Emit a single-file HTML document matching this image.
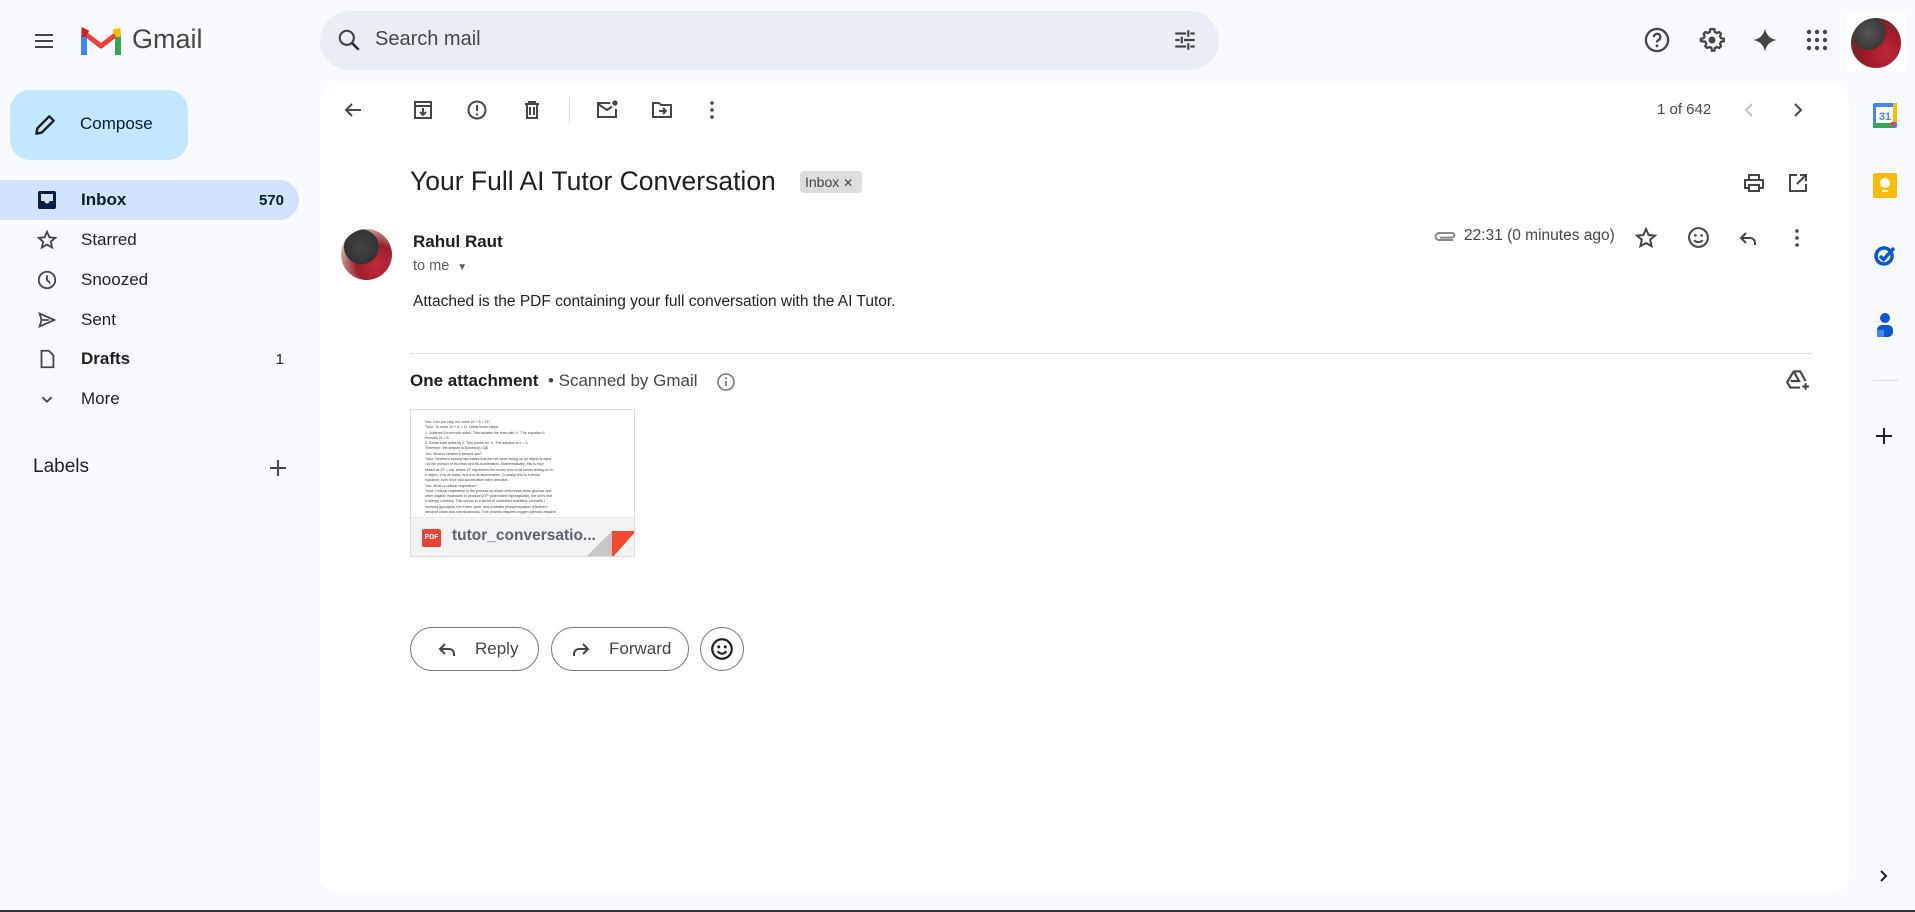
<!DOCTYPE html>
<html><head><meta charset="utf-8"><style>
*{box-sizing:border-box;margin:0;padding:0}
body{width:1915px;height:912px;background:#f8fafd;font-family:"Liberation Sans",Arial,sans-serif;color:#1f1f1f;position:relative;overflow:hidden}
.a{position:absolute}
svg{display:block}
.ic{fill:none;stroke:#444746;stroke-width:2}
.nav{position:absolute;left:0;width:299px;height:40px;display:flex;align-items:center;font-size:17px;color:#1f1f1f}
.nav .t{position:absolute;left:81px}
.nav .c{position:absolute;right:15px;font-size:15px}
.nav svg{position:absolute;left:36px}
.btn{position:absolute;height:44px;border:1px solid #747775;border-radius:22px;display:flex;align-items:center;font-size:17px;color:#444746}
</style></head><body>
<!-- top bar -->
<svg class="a" style="left:32px;top:29px" width="24" height="24" viewBox="0 0 24 24"><path d="M3 6h18M3 12h18M3 18h18" stroke="#444746" stroke-width="2"/></svg>
<svg class="a" style="left:81px;top:27px" width="40" height="30" viewBox="0 0 40 30"><path d="M3 28V6l17 13L37 6v22" fill="none" stroke="#ea4335" stroke-width="5" stroke-linejoin="round"/><path d="M3 28V8" stroke="#4285f4" stroke-width="6"/><path d="M37 28V8" stroke="#34a853" stroke-width="6"/><path d="M32 5l5-1v6" stroke="#fbbc04" stroke-width="5" fill="none"/><path d="M3 10V4l4 2" stroke="#c5221f" stroke-width="5" fill="none"/></svg>
<div class="a" style="left:132px;top:24px;font-size:27px;color:#444746">Gmail</div>
<div class="a" style="left:320px;top:11px;width:899px;height:59px;border-radius:30px;background:#e9eef6"></div>
<svg class="a" style="left:336px;top:27px" width="26" height="26" viewBox="0 0 24 24"><circle cx="10" cy="10" r="6.5" class="ic" stroke="#1f1f1f"/><path d="M15 15l6 6" stroke="#1f1f1f" stroke-width="2.2"/></svg>
<div class="a" style="left:375px;top:28px;font-size:20px;color:#444746">Search mail</div>
<svg class="a" style="left:1172px;top:27px" width="26" height="26" viewBox="0 0 24 24"><path d="M3 6h10M17 6h4M15 3v6M3 12h4M11 12h10M9 9v6M3 18h10M17 18h4M15 15v6" stroke="#444746" stroke-width="2"/></svg>
<svg class="a" style="left:1643px;top:26px" width="28" height="28" viewBox="0 0 24 24"><circle cx="12" cy="12" r="9.5" class="ic"/><path d="M9.3 9.5a2.8 2.8 0 1 1 3.8 2.6c-.8.4-1.1.9-1.1 1.9" class="ic"/><circle cx="12" cy="17" r="1.2" fill="#444746"/></svg>
<svg class="a" style="left:1698px;top:26px" width="28" height="28" viewBox="0 0 24 24"><path d="M12 2.5l2 .3.5 2.3 1.6.9 2.2-.8 1.4 1.5-.8 2.2.9 1.6 2.3.5v2l-2.3.5-.9 1.6.8 2.2-1.4 1.5-2.2-.8-1.6.9-.5 2.3h-2l-.5-2.3-1.6-.9-2.2.8-1.4-1.5.8-2.2-.9-1.6L2.5 13v-2l2.3-.5.9-1.6-.8-2.2 1.4-1.5 2.2.8 1.6-.9.5-2.3z" class="ic"/><circle cx="12" cy="12" r="3" fill="#444746"/></svg>
<svg class="a" style="left:1752px;top:27px" width="26" height="26" viewBox="0 0 24 24"><path d="M12 1C12.8 7 17 11.2 23 12 17 12.8 12.8 17 12 23 11.2 17 7 12.8 1 12 7 11.2 11.2 7 12 1z" fill="#444746"/></svg>
<svg class="a" style="left:1806px;top:29px" width="22" height="22" viewBox="0 0 22 22" fill="#444746"><circle cx="3" cy="3" r="2.2"/><circle cx="11" cy="3" r="2.2"/><circle cx="19" cy="3" r="2.2"/><circle cx="3" cy="11" r="2.2"/><circle cx="11" cy="11" r="2.2"/><circle cx="19" cy="11" r="2.2"/><circle cx="3" cy="19" r="2.2"/><circle cx="11" cy="19" r="2.2"/><circle cx="19" cy="19" r="2.2"/></svg>
<div class="a" style="left:1847px;top:13px;width:59px;height:59px;background:#fff"></div>
<div class="a" style="left:1851px;top:18px;width:50px;height:50px;border-radius:50%;background:radial-gradient(circle at 35% 30%,#555 0,#3a3a3a 35%,transparent 36%),radial-gradient(circle at 70% 70%,#c0283a 0,#a01c2c 40%,#6a2a2a 70%);"></div>
<!-- sidebar -->
<div class="a" style="left:10px;top:90px;width:178px;height:70px;border-radius:20px;background:#c2e7ff"></div>
<svg class="a" style="left:32px;top:112px" width="26" height="26" viewBox="0 0 24 24"><path d="M4 20l1-5L16 4l4 4L9 19z" fill="none" stroke="#1f1f1f" stroke-width="2.2" stroke-linejoin="round"/></svg>
<div class="a" style="left:80px;top:114px;font-size:17px;color:#001d35">Compose</div>
<div class="a" style="left:0;top:180px;width:299px;height:40px;border-radius:0 20px 20px 0;background:#d3e3fd"></div>
<div class="nav" style="top:180px;font-weight:bold;color:#001d35"><svg width="22" height="22" viewBox="0 0 22 22"><rect x="2" y="2" width="18" height="18" rx="2" fill="#041e49"/><path d="M5 5h12v7h-3.5a2.5 2.5 0 0 1-5 0H5z" fill="#d3e3fd"/></svg><span class="t">Inbox</span><span class="c">570</span></div>
<div class="nav" style="top:220px"><svg width="22" height="22" viewBox="0 0 24 24"><path d="M12 3l2.7 6 6.3.6-4.8 4.2 1.4 6.4L12 17l-5.6 3.2 1.4-6.4L3 9.6 9.3 9z" class="ic"/></svg><span class="t">Starred</span></div>
<div class="nav" style="top:260px"><svg width="22" height="22" viewBox="0 0 24 24"><circle cx="12" cy="12" r="9" class="ic"/><path d="M12 7v5l3.5 3.5" class="ic"/></svg><span class="t">Snoozed</span></div>
<div class="nav" style="top:300px"><svg width="22" height="22" viewBox="0 0 24 24"><path d="M4 5l16 7-16 7 2-7z M6 12h8" class="ic"/></svg><span class="t">Sent</span></div>
<div class="nav" style="top:339px;font-weight:bold"><svg width="22" height="22" viewBox="0 0 24 24"><path d="M6 3h8l5 5v13H6z" class="ic"/></svg><span class="t">Drafts</span><span class="c" style="font-weight:normal">1</span></div>
<div class="nav" style="top:379px"><svg width="22" height="22" viewBox="0 0 24 24"><path d="M7 10l5 5 5-5" class="ic"/></svg><span class="t">More</span></div>
<div class="a" style="left:33px;top:456px;font-size:19px">Labels</div>
<svg class="a" style="left:268px;top:458px" width="20" height="20" viewBox="0 0 20 20"><path d="M10 2v16M2 10h16" stroke="#444746" stroke-width="2"/></svg>
<!-- main card -->
<div class="a" style="left:320px;top:81px;width:1529px;height:812px;border-radius:20px;background:#fff"></div>
<svg class="a" style="left:341px;top:98px" width="24" height="24" viewBox="0 0 24 24"><path d="M20 12H5M11 6l-6 6 6 6" class="ic"/></svg>
<svg class="a" style="left:411px;top:98px" width="24" height="24" viewBox="0 0 24 24"><path d="M4 4h16v16H4zM4 8h16M12 10v7M9 14l3 3 3-3" class="ic"/></svg>
<svg class="a" style="left:465px;top:98px" width="24" height="24" viewBox="0 0 24 24"><circle cx="12" cy="12" r="8.5" class="ic"/><path d="M12 7v6" class="ic"/><circle cx="12" cy="16.5" r="1.2" fill="#444746"/></svg>
<svg class="a" style="left:520px;top:98px" width="24" height="24" viewBox="0 0 24 24"><path d="M5 6h14M9 6V4h6v2M7 6v14h10V6M10 9v8M14 9v8" class="ic"/></svg>
<div class="a" style="left:569px;top:97px;width:1px;height:26px;background:#dadce0"></div>
<svg class="a" style="left:595px;top:98px" width="24" height="24" viewBox="0 0 24 24"><path d="M15 5H3v14h18v-8M3 6l9 6 5-3.5" class="ic"/><circle cx="20" cy="5" r="2.6" fill="#444746"/></svg>
<svg class="a" style="left:650px;top:98px" width="24" height="24" viewBox="0 0 24 24"><path d="M3 5h6l2 2h10v12H3zM9 13h7M13 10l3 3-3 3" class="ic"/></svg>
<svg class="a" style="left:700px;top:98px" width="24" height="24" viewBox="0 0 24 24" fill="#444746"><circle cx="12" cy="5" r="1.8"/><circle cx="12" cy="12" r="1.8"/><circle cx="12" cy="19" r="1.8"/></svg>
<div class="a" style="left:1657px;top:101px;font-size:15px;color:#444746">1 of 642</div>
<svg class="a" style="left:1740px;top:100px" width="18" height="20" viewBox="0 0 18 20"><path d="M12 4l-6 6 6 6" fill="none" stroke="#c4c7c5" stroke-width="2"/></svg>
<svg class="a" style="left:1789px;top:100px" width="18" height="20" viewBox="0 0 18 20"><path d="M6 4l6 6-6 6" fill="none" stroke="#444746" stroke-width="2"/></svg>
<div class="a" style="left:410px;top:166px;font-size:26.5px;color:#1f1f1f">Your Full AI Tutor Conversation</div>
<div class="a" style="left:800px;top:171px;width:62px;height:22px;border-radius:4px;background:#dddddd;font-size:14px;color:#444;padding:3px 0 0 5px">Inbox <span style="font-size:12px">✕</span></div>
<svg class="a" style="left:1742px;top:171px" width="24" height="24" viewBox="0 0 24 24"><path d="M7 8V4h10v4M6 17H3V9h18v8h-3M7 14h10v6H7z" class="ic"/></svg>
<svg class="a" style="left:1786px;top:171px" width="24" height="24" viewBox="0 0 24 24"><path d="M11 4H4v16h16v-7M14 4h6v6M20 4l-9 9" class="ic"/></svg>
<div class="a" style="left:341px;top:229px;width:51px;height:51px;border-radius:50%;background:radial-gradient(circle at 40% 35%,#444 0,#333 38%,transparent 39%),radial-gradient(circle at 70% 70%,#c4283c 0,#9a2030 40%,#c9b0a0 75%)"></div>
<div class="a" style="left:413px;top:232px;font-size:17px;font-weight:bold">Rahul Raut</div>
<div class="a" style="left:413px;top:258px;font-size:14.5px;color:#5e5e5e">to me <span style="font-size:10px;margin-left:4px">▼</span></div>
<div class="a" style="left:413px;top:293px;font-size:15.5px;color:#222">Attached is the PDF containing your full conversation with the AI Tutor.</div>
<svg class="a" style="left:1433px;top:228px" width="24" height="18" viewBox="0 0 24 18"><path d="M20 12H6a3.5 3.5 0 0 1 0-7h13a2.3 2.3 0 0 1 0 4.6H7" fill="none" stroke="#888" stroke-width="2"/></svg>
<div class="a" style="left:1464px;top:227px;font-size:15.5px;color:#444746">22:31 (0 minutes ago)</div>
<svg class="a" style="left:1634px;top:226px" width="24" height="24" viewBox="0 0 24 24"><path d="M12 3l2.7 6 6.3.6-4.8 4.2 1.4 6.4L12 17l-5.6 3.2 1.4-6.4L3 9.6 9.3 9z" class="ic"/></svg>
<svg class="a" style="left:1686px;top:225px" width="25" height="25" viewBox="0 0 24 24"><circle cx="12" cy="12" r="9" class="ic"/><circle cx="9" cy="10" r="1.3" fill="#444746"/><circle cx="15" cy="10" r="1.3" fill="#444746"/><path d="M8 14.5c2 2.5 6 2.5 8 0" class="ic"/></svg>
<svg class="a" style="left:1736px;top:226px" width="24" height="24" viewBox="0 0 24 24"><path d="M10 7l-5 5 5 5M5 12h9a5 5 0 0 1 5 5v2" class="ic"/></svg>
<svg class="a" style="left:1785px;top:226px" width="24" height="24" viewBox="0 0 24 24" fill="#444746"><circle cx="12" cy="5" r="1.8"/><circle cx="12" cy="12" r="1.8"/><circle cx="12" cy="19" r="1.8"/></svg>
<div class="a" style="left:410px;top:353px;width:1401px;border-top:1px dotted #c4c7c5"></div>
<div class="a" style="left:410px;top:371px;font-size:17px;color:#1f1f1f"><b>One attachment</b> <span style="color:#444746">&nbsp;• Scanned by Gmail</span></div>
<svg class="a" style="left:716px;top:372px" width="20" height="20" viewBox="0 0 20 20"><circle cx="10" cy="10" r="8" fill="none" stroke="#777" stroke-width="1.6"/><path d="M10 9v5" stroke="#777" stroke-width="1.8"/><circle cx="10" cy="6.3" r="1.1" fill="#777"/></svg>
<svg class="a" style="left:1785px;top:367px" width="26" height="26" viewBox="0 0 24 24"><path d="M8 4h6l5 9M8 4l-6 10 3 5h9M8 4l5 9H5" class="ic" stroke-width="1.7"/><path d="M19 15v6M16 18h6" class="ic"/></svg>
<!-- attachment -->
<div class="a" style="left:410px;top:409px;width:225px;height:148px;border:1px solid #dadce0;overflow:hidden;background:#fff">
<div style="position:absolute;left:14px;top:10px;width:180px;font-size:3.6px;line-height:5.3px;color:#444">You: Can you help me solve 2x + 5 = 11?<br>Tutor: To solve 2x + 5 = 11, follow these steps:<br>1. Subtract 5 from both sides. This isolates the term with 'x'. The equation b<br>ecomes 2x = 6.<br>2. Divide both sides by 2. This solves for 'x'. The solution is x = 3.<br>Therefore, the answer is $\boxed{x=3}$<br>You: What is Newton's second law?<br>Tutor: Newton's second law states that the net force acting on an object is equa<br>l to the product of its mass and its acceleration. Mathematically, this is expr<br>essed as ΣF = ma, where ΣF represents the vector sum of all forces acting on th<br>e object, m is its mass, and a is its acceleration. Crucially, this is a vector<br>equation; both force and acceleration have direction.<br>You: What is cellular respiration?<br>Tutor: Cellular respiration is the process by which cells break down glucose and<br>other organic molecules to produce ATP (adenosine triphosphate), the cell's mai<br>n energy currency. This occurs in a series of controlled reactions, primarily i<br>nvolving glycolysis, the Krebs cycle, and oxidative phosphorylation (electron t<br>ransport chain and chemiosmosis). This process requires oxygen (aerobic respirat</div>
<div style="position:absolute;left:0;top:107px;width:225px;height:41px;background:#f1f3f4;border-top:1px solid #e8e8e8"></div>
<div style="position:absolute;left:11px;top:119px;width:19px;height:18px;background:#ea4335;border-radius:2px;color:#fff;font-size:7px;font-weight:bold;text-align:center;line-height:18px">PDF</div>
<div style="position:absolute;left:41px;top:117px;font-size:15.5px;font-weight:bold;color:#5f6368">tutor_conversatio...</div>
<svg style="position:absolute;left:174px;top:114px" width="51" height="34" viewBox="0 0 51 34"><path d="M0 34L27 7v27z" fill="#c6c6c6"/><path d="M27 7h24L27 34z" fill="#f24a2e"/></svg>
<div style="position:absolute;left:199px;top:114px;width:26px;height:6px;background:#f1f3f4"></div>
</div>
<!-- buttons -->
<div class="btn" style="left:410px;top:627px;width:129px"><svg style="margin-left:24px" width="24" height="24" viewBox="0 0 24 24"><path d="M10 7l-5 5 5 5M5 12h9a5 5 0 0 1 5 5v2" class="ic"/></svg><span style="margin-left:16px">Reply</span></div>
<div class="btn" style="left:551px;top:627px;width:138px"><svg style="margin-left:17px" width="24" height="24" viewBox="0 0 24 24"><path d="M14 7l5 5-5 5M19 12h-9a5 5 0 0 0-5 5v2" class="ic"/></svg><span style="margin-left:16px">Forward</span></div>
<div class="btn" style="left:700px;top:627px;width:44px;justify-content:center"><svg width="26" height="26" viewBox="0 0 24 24"><circle cx="12" cy="12" r="9" fill="none" stroke="#1f1f1f" stroke-width="2"/><circle cx="9" cy="10" r="1.4" fill="#1f1f1f"/><circle cx="15" cy="10" r="1.4" fill="#1f1f1f"/><path d="M8 14c2 3 6 3 8 0" fill="none" stroke="#1f1f1f" stroke-width="2"/></svg></div>
<!-- right panel -->
<svg class="a" style="left:1873px;top:103px" width="24" height="25" viewBox="0 0 24 25"><rect x="0" y="0" width="24" height="25" rx="2" fill="#4285f4"/><rect x="3" y="4" width="18" height="16" fill="#fff"/><rect x="0" y="20" width="18" height="5" fill="#34a853"/><rect x="20" y="0" width="4" height="20" fill="#fbbc04"/><path d="M18 25l6-6h-6z" fill="#ea4335"/><text x="12" y="17" font-size="11" font-family="Liberation Sans" fill="#4285f4" text-anchor="middle" font-weight="bold">31</text></svg>
<div class="a" style="left:1873px;top:173px;width:24px;height:25px;border-radius:2px;background:#fbbc04"></div>
<div class="a" style="left:1880px;top:178px;width:10px;height:10px;border-radius:50%;background:#fff"></div>
<div class="a" style="left:1882px;top:190px;width:6px;height:2px;background:#fff"></div>
<svg class="a" style="left:1873px;top:243px" width="24" height="24" viewBox="0 0 24 24"><circle cx="11" cy="13" r="8" fill="none" stroke="#0b57d0" stroke-width="3.5"/><path d="M7 13l3.5 3.5L21 5" fill="none" stroke="#0b57d0" stroke-width="3.5"/></svg>
<svg class="a" style="left:1874px;top:312px" width="22" height="26" viewBox="0 0 22 26"><circle cx="11" cy="6" r="5" fill="#0b57d0"/><rect x="3" y="13" width="16" height="12" rx="5" fill="#0b57d0"/><rect x="3" y="18" width="7" height="7" fill="#4285f4"/></svg>
<div class="a" style="left:1873px;top:380px;width:25px;height:1px;background:#dadce0"></div>
<svg class="a" style="left:1875px;top:427px" width="18" height="18" viewBox="0 0 18 18"><path d="M9 1v16M1 9h16" stroke="#1f1f1f" stroke-width="2"/></svg>
<svg class="a" style="left:1876px;top:868px" width="16" height="16" viewBox="0 0 16 16"><path d="M5 3l5 5-5 5" fill="none" stroke="#1f1f1f" stroke-width="2"/></svg>
<div class="a" style="left:0;top:910px;width:1915px;height:2px;background:#333"></div>
</body></html>
